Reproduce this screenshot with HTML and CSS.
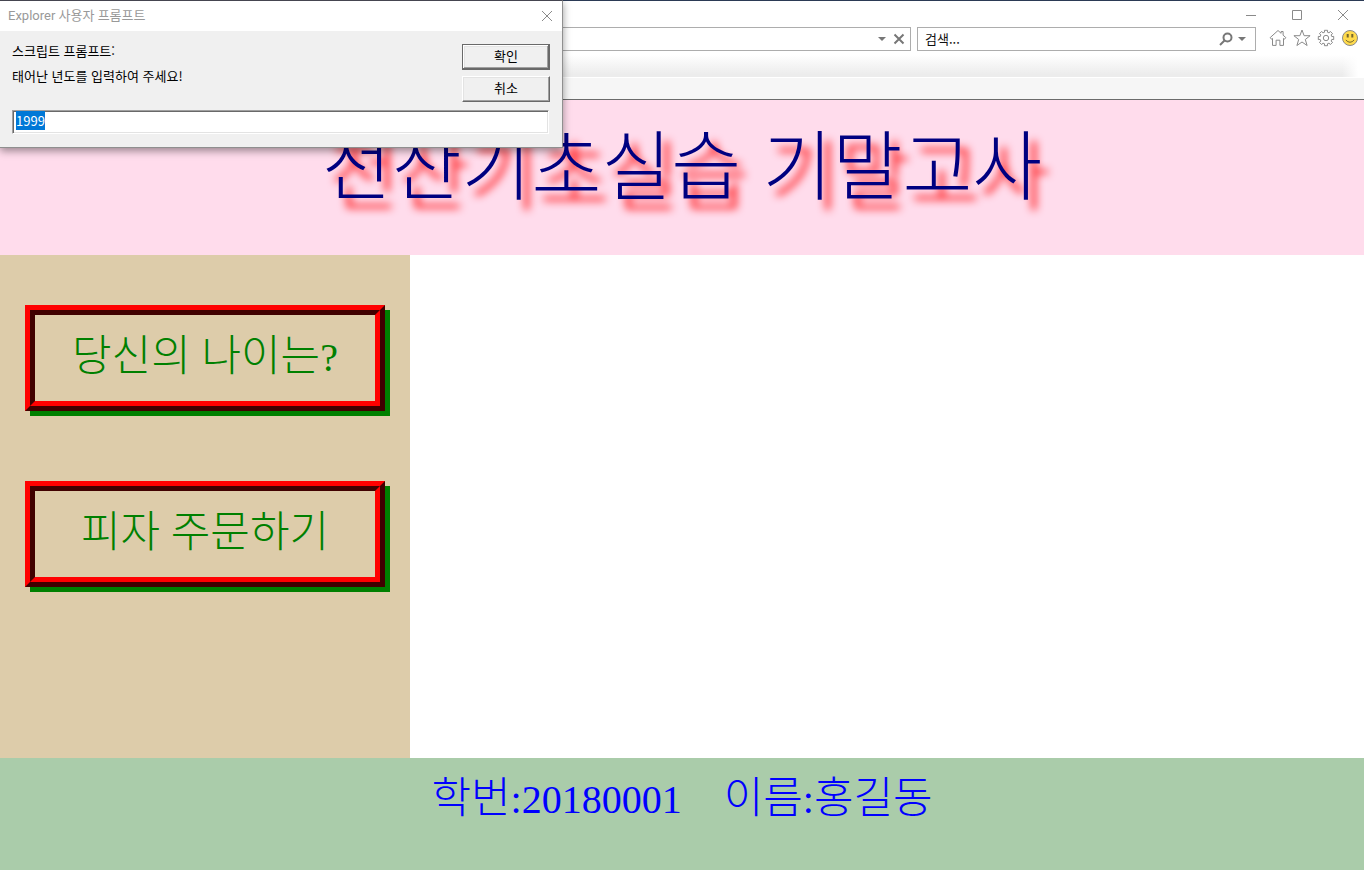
FILE: index.html
```html
<!DOCTYPE html>
<html lang="ko">
<head>
<meta charset="utf-8">
<title>전산기초실습 기말고사</title>
<link rel="stylesheet" href="styles.css">
</head>
<body>
<div class="browser">
  <div class="window-controls">
    <button type="button" class="window-button" aria-label="최소화"><svg width="12" height="12" viewBox="0 0 12 12"><path d="M1 6.500h10"/></svg></button>
    <button type="button" class="window-button" aria-label="최대화"><svg width="12" height="12" viewBox="0 0 12 12"><path d="M1.500 1.500h9v9h-9z"/></svg></button>
    <button type="button" class="window-button" aria-label="닫기"><svg width="12" height="12" viewBox="0 0 12 12"><path d="M1 1l10 10M11 1L1 11"/></svg></button>
  </div>
  <div class="toolbar">
    <div class="field address">
      <input class="field-input" type="text" aria-label="주소">
      <button type="button" class="icon-button" aria-label="주소 목록"><svg width="8" height="5" viewBox="0 0 8 5"><path class="solid" d="M0 0h8L4 4z"/></svg></button>
      <button type="button" class="icon-button" aria-label="중지"><svg width="12" height="12" viewBox="0 0 12 12"><path class="bold" d="M1.500 1.500l9 9M10.500 1.500l-9 9"/></svg></button>
    </div>
    <div class="field search">
      <input class="field-input" type="text" placeholder="검색..." aria-label="검색">
      <button type="button" class="icon-button" aria-label="찾기"><svg width="14" height="14" viewBox="0 0 14 14"><circle class="bold" cx="8.500" cy="5.500" r="4"/><path class="bold" d="M5.500 8.500L1 13"/></svg></button>
      <button type="button" class="icon-button" aria-label="검색 목록"><svg width="8" height="5" viewBox="0 0 8 5"><path class="solid" d="M0 0h8L4 4z"/></svg></button>
    </div>
    <div class="tools">
      <button type="button" class="icon-button" aria-label="홈"><svg width="18" height="18" viewBox="0 0 18 18"><path d="M9 1.500L1.200 8.600l1.300 1.600 1-.8v7h3.600v-5.200h3.800v5.200h3.600v-7l1 .8 1.300-1.600-2.700-2.400V2.500h-2v1.800z"/></svg></button>
      <button type="button" class="icon-button" aria-label="즐겨찾기"><svg width="18" height="18" viewBox="0 0 18 18"><path d="M9 1l2.100 5.700h6l-4.800 3.800 1.800 6L9 13l-5.100 3.500 1.800-6L.9 6.700h6z"/></svg></button>
      <button type="button" class="icon-button" aria-label="도구"><svg width="18" height="18" viewBox="0 0 18 18"><circle cx="9" cy="9" r="2.700"/><path d="M7.600 3.200L7.400 1.300h3.200l-.2 1.900 1.700.7 1.200-1.500 2.300 2.300-1.500 1.200.7 1.700 1.900-.2v3.200l-1.900-.2-.7 1.700 1.500 1.200-2.300 2.300-1.200-1.500-1.700.7.200 1.900H7.400l.2-1.900-1.700-.7-1.200 1.500-2.300-2.300 1.500-1.200-.7-1.700-1.900.2V7.400l1.900.2.700-1.700-1.500-1.200 2.300-2.300 1.200 1.500z"/></svg></button>
      <button type="button" class="icon-button" aria-label="의견 보내기"><svg width="18" height="18" viewBox="0 0 18 18"><circle cx="9" cy="9" r="7.500" fill="#ffdb4d"/><path d="M6.700 5v3.500M11.300 5v3.500" stroke="#75662c" stroke-width="2"/><path d="M4.800 11q4.200 4.500 8.400 0" stroke="#75662c"/></svg></button>
    </div>
  </div>
  <div class="tab-strip"></div>
  <div class="command-bar"></div>
</div>

<header class="banner"><h1 class="banner-title">전산기초실습 기말고사</h1></header>
<div class="content">
  <nav class="menu">
    <button type="button" class="menu-button"><span class="menu-label"><span class="hangul">당신의 나이는</span>?</span></button>
    <button type="button" class="menu-button"><span class="menu-label"><span class="hangul">피자 주문하기</span></span></button>
  </nav>
  <main class="stage"></main>
</div>
<footer class="footer">
  <span><span class="hangul">학번</span>:20180001</span>
  <span><span class="hangul">이름</span>:<span class="hangul">홍길동</span></span>
</footer>

<form class="dialog" role="dialog" aria-labelledby="dialog-title">
  <div class="dialog-bar">
    <span id="dialog-title">Explorer 사용자 프롬프트</span>
    <button type="button" class="icon-button" aria-label="대화 상자 닫기"><svg width="12" height="12" viewBox="0 0 12 12"><path d="M1 1l10 10M11 1L1 11"/></svg></button>
  </div>
  <div class="dialog-body">
    <label class="dialog-text" for="birth-year"><span>스크립트 프롬프트:</span><span>태어난 년도를 입력하여 주세요!</span></label>
    <div class="dialog-actions">
      <button type="button" class="dialog-button default"><span>확인</span></button>
      <button type="button" class="dialog-button">취소</button>
    </div>
    <input class="dialog-input" id="birth-year" type="text" value="1999">
  </div>
</form>
<script src="prompt.js"></script>
</body>
</html>
```
FILE: styles.css
```css
* { box-sizing: border-box; }
body {
  margin: 0;
  min-height: 100vh;
  display: flex;
  flex-direction: column;
  position: relative;
  background: #fff;
  font: 13px/16px "Noto Sans CJK KR", sans-serif;
}
button, input { font: inherit; color: inherit; margin: 0; padding: 0; }
button { border: 0; background: none; }
input { border: 0; outline: 0; }
svg { display: block; fill: none; stroke: #8a8a8a; }
.solid { fill: #777; stroke: none; }
.bold { stroke: #777; stroke-width: 2; }

.browser { border-top: 1px solid #2b3a55; border-bottom: 1px solid #6b6b6b; }
.window-controls { display: flex; justify-content: flex-end; height: 26px; padding: 8px 15px 0 0; gap: 34px; }
.window-button { height: 12px; }
.toolbar { display: flex; gap: 6px; height: 24px; }
.field { display: flex; align-items: center; border: 1px solid #adadad; background: #fff; }
.field-input { flex: 1; min-width: 0; padding-left: 7px; background: none; }
.field-input::placeholder { color: #111; opacity: 1; }
.address { flex: 905; gap: 7px; padding-right: 5px; border-left: 0; }
.search { flex: 328; gap: 5px; padding-right: 9px; }
.tools { display: flex; align-items: center; gap: 6px; padding: 0 5px 2px 7px; }
.tab-strip {
  height: 26px;
  background:
    linear-gradient(to right, transparent calc(100% - 22px), #fff calc(100% - 6px)),
    linear-gradient(#fff 15%, #ececec 90%);
}
.command-bar { height: 22px; border-top: 1px solid #fff; background: #f6f6f6; }

.banner { height: 155px; padding-top: 16px; background: #ffdcec; text-align: center; }
.banner-title {
  margin: 0;
  font-size: 76px;
  line-height: 90px;
  font-weight: 300;
  color: #000080;
  text-shadow: 8px 10px 8px #f00;
}
.content { flex: 1; display: flex; }
.menu { width: 30%; min-width: 410px; padding: 50px 25px; display: flex; flex-direction: column; gap: 70px; background: #dca; }
.menu-button {
  border: 5px solid;
  border-color: #f00 #400000 #400000 #f00;
  box-shadow: 5px 5px 0 #008000;
  font: 300 40px/48px "Liberation Serif", "Noto Sans CJK KR", serif;
  color: #008000;
}
.menu-label { display: block; height: 96px; padding: 18px 0; border: 5px solid; border-color: #400000 #f00 #f00 #400000; }
.hangul { font-size: 43px; }
.stage { flex: 1; }
.footer {
  height: 112px;
  padding-top: 17px;
  display: flex;
  justify-content: center;
  gap: 42px;
  background: #aca;
  font: 300 40px/48px "Liberation Serif", "Noto Sans CJK KR", serif;
  color: #00f;
}

.dialog {
  position: absolute;
  top: 0;
  left: 0;
  width: 563px;
  border: 1px solid #8f8f8f;
  border-width: 1px 1px 1px 0;
  border-top-color: #454550;
  background: #f0f0f0;
  box-shadow: 0 3px 8px rgba(0, 0, 0, .4);
}
.dialog-bar { display: flex; justify-content: space-between; align-items: center; height: 30px; padding: 0 9px 1px 8px; background: #fff; color: #999; font-family: Roboto, "Noto Sans CJK KR", sans-serif; }
.dialog-body { display: grid; grid-template-columns: 1fr 88px; padding: 13px 12px 13px; color: #000; }
.dialog-text { display: flex; flex-direction: column; gap: 9px; }
.dialog-text span { height: 16px; line-height: 14px; }
.dialog-actions { display: flex; flex-direction: column; gap: 6px; }
.dialog-button {
  height: 26px;
  padding-bottom: 2px;
  border: 1px solid;
  border-color: #fff #696969 #696969 #fff;
  box-shadow: inset -1px -1px #a0a0a0, inset 1px 1px #e3e3e3;
  line-height: 20px;
}
.dialog-button.default { border-color: #696969; box-shadow: inset -1px -1px #696969, inset 1px 1px #fff, inset -2px -2px #a0a0a0, inset 2px 2px #e3e3e3; }
.dialog-input {
  grid-column: 1 / 3;
  height: 24px;
  margin: 8px 1px 0 0;
  padding: 0 3px 3px;
  border: 1px solid;
  border-color: #a0a0a0 #fff #fff #a0a0a0;
  box-shadow: inset 1px 1px #696969, inset -1px -1px #e3e3e3;
  background: #fff;
  caret-color: transparent;
}
.dialog-input::selection { background: #0078d7; color: #fff; }
```
FILE: prompt.js
```js
const birthYear = document.getElementById("birth-year");
birthYear.focus();
birthYear.select();
```
